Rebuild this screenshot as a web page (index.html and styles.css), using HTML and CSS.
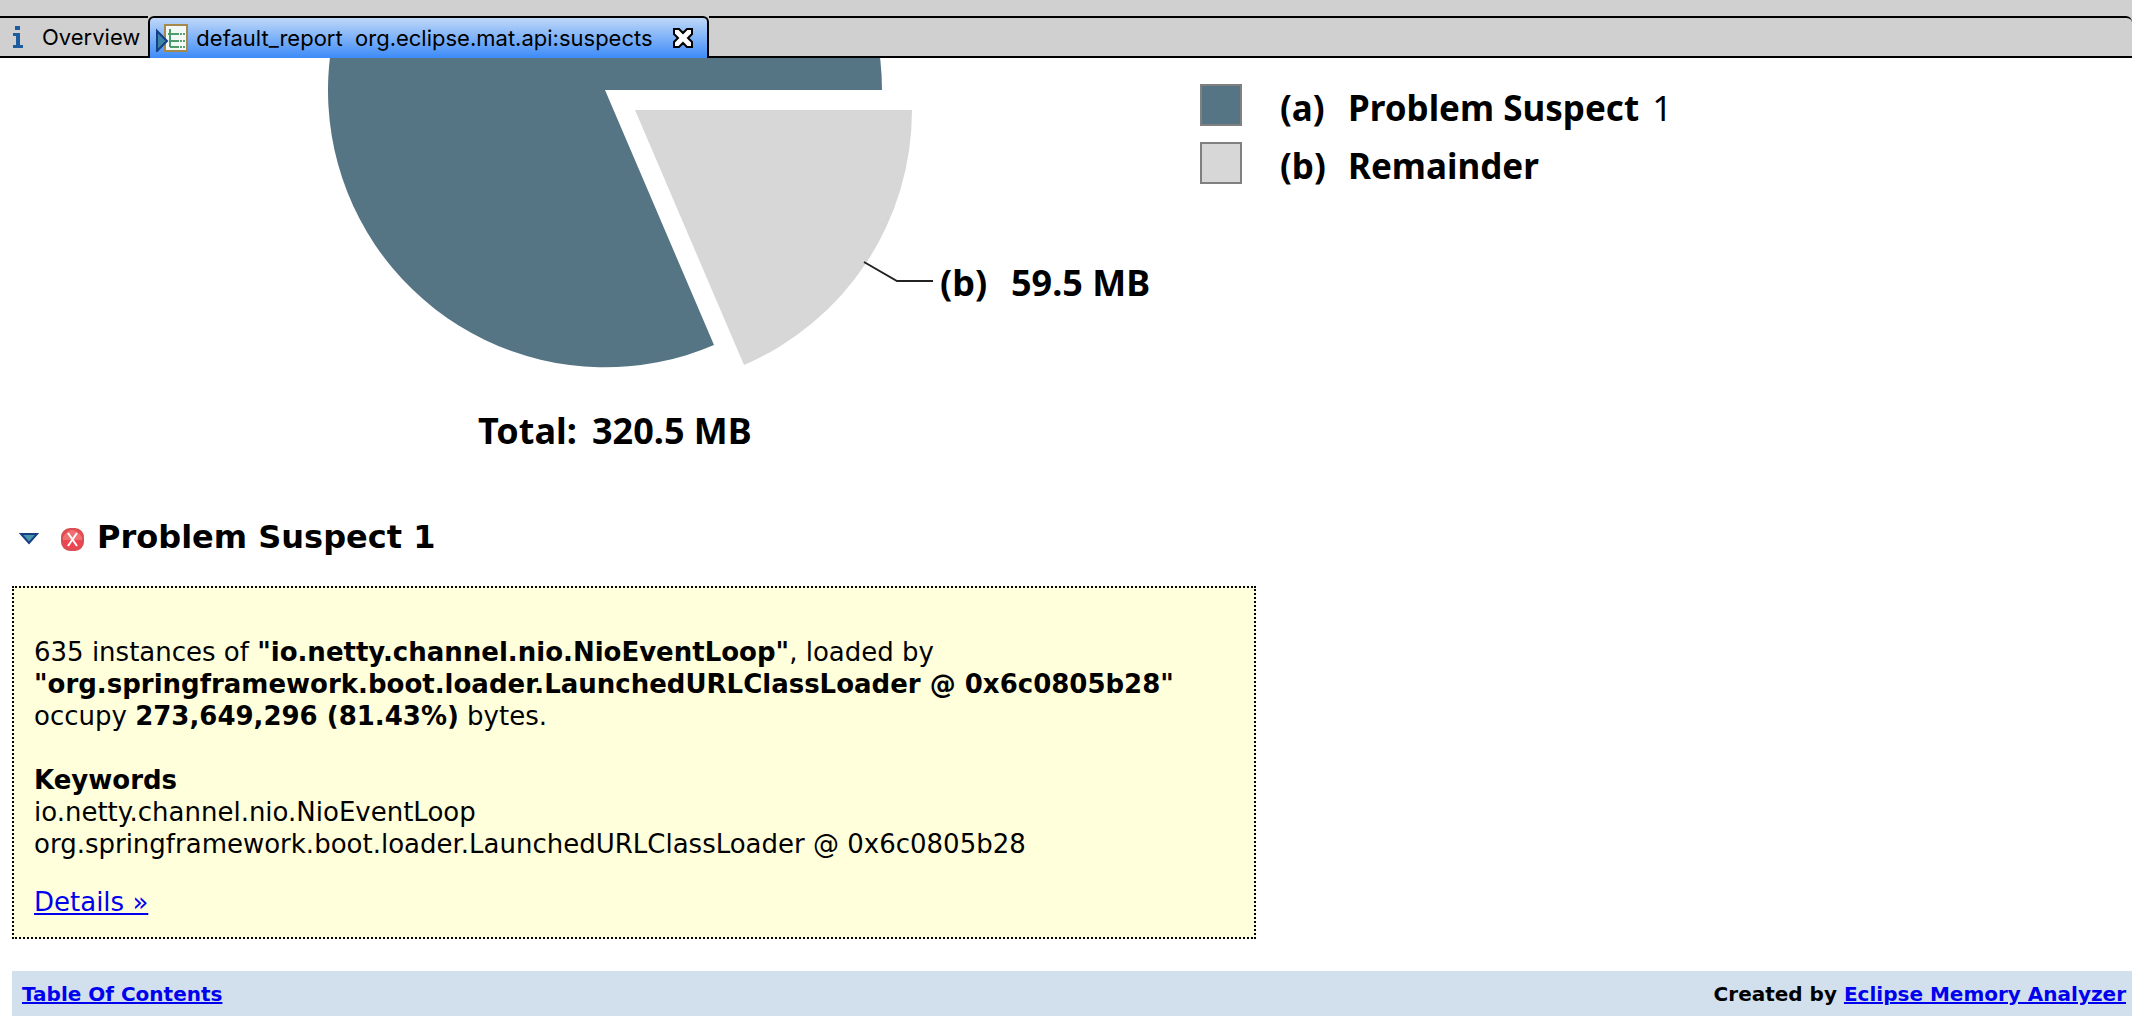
FILE: index.html
```html
<!DOCTYPE html>
<html lang="en">
<head>
<meta charset="utf-8">
<title>default_report org.eclipse.mat.api:suspects</title>
<link rel="stylesheet" href="styles.css">
</head>
<body>
<header class="toolbar"></header>
<nav class="tabs" aria-label="Editor tabs">
  <button class="tab" type="button">
    <svg class="info-icon" width="10" height="24" viewBox="0 0 10 24" aria-hidden="true"><path d="M2 1h5v4H2zM0 8h7v12h3v3H0v-3h3v-9H0z" fill="#1c5ca0"/></svg>
    <span>Overview</span>
  </button>
  <div class="tab tab-active">
    <svg width="32" height="28" viewBox="0 0 32 28" aria-hidden="true">
      <rect x="9" y="1" width="22" height="26" fill="#f2f8f6" stroke="#a5884c" stroke-width="2"/>
      <path d="M14 5v18M12 10h11M14 17h9M14 23h9" stroke="#4d9c69" stroke-width="2" fill="none"/>
      <path d="M24 10h2M27 10h2M24 17h2M27 17h2M24 23h2M27 23h2" stroke="#5aa274" stroke-width="2"/>
      <path d="M1 7v20l10-10z" fill="#3c83a5" stroke="#123f87" stroke-width="2"/>
    </svg>
    <button class="tab-label" type="button">default_report&nbsp; org.eclipse.mat.api:suspects</button>
    <button class="tab-close" type="button" aria-label="Close">
      <svg width="20" height="20" viewBox="0 0 20 20" aria-hidden="true"><path d="M1 1h5l4 4 4-4h5v5l-4 4 4 4v5h-5l-4-4-4 4H1v-5l4-4-4-4z" fill="#fff" stroke="#000" stroke-width="2"/></svg>
    </button>
  </div>
  <div class="tabs-rest"></div>
</nav>
<main class="report">
  <section class="chart">
    <svg class="pie" width="1200" height="430" viewBox="0 58 1200 430" role="img" aria-label="Memory by problem suspect">
      <path d="M605 90H882A277 277 0 1 0 714 345Z" fill="#557484"/>
      <path d="M635 110H912A277 277 0 0 1 744 365Z" fill="#d7d7d7"/>
      <path d="M864 262L897 281H933" fill="none" stroke="#222" stroke-width="2"/>
      <text class="pie-text" x="940" y="296">(b)</text>
      <text class="pie-text" x="1011" y="296">59.5 MB</text>
      <text class="pie-text" x="478" y="444">Total:</text>
      <text class="pie-text" x="592" y="444">320.5 MB</text>
    </svg>
    <ul class="legend">
      <li><span class="swatch suspect"></span><span class="key">(a)</span><span class="name">Problem Suspect <span class="number">1</span></span></li>
      <li><span class="swatch remainder"></span><span class="key">(b)</span><span class="name">Remainder</span></li>
    </ul>
  </section>
  <section>
    <div class="suspect-head">
      <button class="toggle" type="button" aria-label="Collapse">
        <svg width="20" height="12" viewBox="0 0 20 12" aria-hidden="true"><path d="M2 1h16l-8 9z" fill="#4a96ad" stroke="#163f85" stroke-width="2"/></svg>
      </button>
      <svg width="24" height="24" viewBox="0 0 24 24" aria-hidden="true"><rect x="2" y="2" width="21" height="21" rx="8" fill="#ee4650" stroke="#d75055" stroke-width="2"/><path d="M3 10q9-14 19 0v3H3z" fill="#f18c88" opacity=".6"/><path d="M8 6l9 13M17 6L8 19" stroke="#fff" stroke-width="2"/></svg>
      <h2>Problem Suspect 1</h2>
    </div>
    <div class="important">
      <p>635 instances of <strong>"io.netty.channel.nio.NioEventLoop"</strong>, loaded by <strong>"org.springframework.boot.loader.LaunchedURLClassLoader @ 0x6c0805b28"</strong> occupy <strong>273,649,296 (81.43%)</strong> bytes.</p>
      <p><strong>Keywords</strong><br>io.netty.channel.nio.NioEventLoop<br>org.springframework.boot.loader.LaunchedURLClassLoader @ 0x6c0805b28</p>
      <a class="details" href="#details">Details »</a>
    </div>
  </section>
  <footer class="footer">
    <a href="#toc">Table Of Contents</a>
    <span>Created by <a href="#mat">Eclipse Memory Analyzer</a></span>
  </footer>
</main>
</body>
</html>
```
FILE: styles.css
```css
* { box-sizing: border-box; }
html { overflow: hidden; }
body {
  margin: 0;
  background: #fff;
  color: #000;
  font-family: "DejaVu Sans", Verdana, sans-serif;
}
button {
  margin: 0;
  padding: 0;
  border: 0;
  background: none;
  color: inherit;
  font: inherit;
}
svg { display: block; flex: none; }
a { color: #00e; }

.toolbar { height: 16px; background: #d0d0d0; }
.tabs {
  display: flex;
  height: 42px;
  background: #d0d0d0;
  font: 22px/26px Inter, sans-serif;
  white-space: nowrap;
}
.tab {
  display: flex;
  align-items: center;
  gap: 19px;
  padding: 0 8px 0 13px;
  border-top: 2px solid #000;
  border-bottom: 2px solid #000;
}
.tab-active {
  gap: 8px;
  padding: 0 14px 0 6px;
  border: solid #000;
  border-width: 2px 2px 0;
  border-radius: 6px 6px 0 0;
  background: linear-gradient(#bfd8f8, #3d8bf8);
}
.tab-close { margin-left: 12px; }
.tabs-rest {
  flex: 1;
  border-top: 2px solid #000;
  border-bottom: 2px solid #000;
  border-top-right-radius: 6px;
}

.chart { display: flex; }
.pie-text, .legend {
  font-family: "Noto Sans", sans-serif;
  font-size: 36px;
  font-weight: 700;
}
.legend {
  display: grid;
  gap: 16px;
  align-content: start;
  margin: 0;
  padding: 26px 0 0;
  font-size: 35px;
  list-style: none;
}
.legend li { display: flex; height: 42px; line-height: 42px; }
.swatch {
  width: 42px;
  height: 42px;
  margin-right: 38px;
  border: 2px solid #808080;
}
.suspect { background: #557484; }
.remainder { background: #d7d7d7; }
.key, .name { padding-top: 3px; }
.key { width: 68px; }
.number { margin-left: 4px; font-weight: 400; }

.suspect-head {
  display: flex;
  align-items: center;
  height: 98px;
  padding: 4px 0 0 19px;
}
.toggle { margin-right: 21px; }
.suspect-head h2 { margin: 0 0 4px 13px; font-size: 32px; line-height: 40px; }
.important {
  max-width: 1244px;
  margin-left: 12px;
  padding: 48px 20px 19px;
  border: 2px dotted #000;
  background: #ffffdc;
  font-size: 26px;
  line-height: 32px;
}
.important p { margin: 0 0 32px; }
.important p + p { margin-bottom: 26px; }
.footer {
  display: flex;
  justify-content: space-between;
  margin: 32px 0 0 12px;
  padding: 9px 6px 12px 10px;
  background: #d2e0ed;
  font-size: 20px;
  font-weight: 700;
  line-height: 28px;
}
```
